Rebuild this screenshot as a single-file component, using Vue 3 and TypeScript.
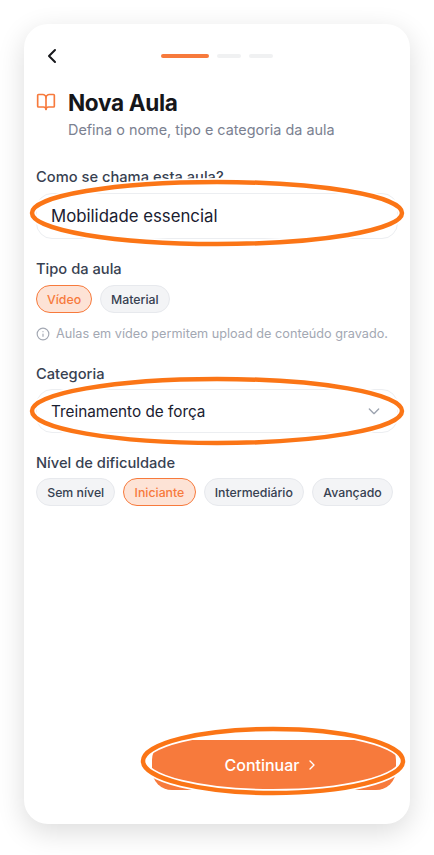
<script setup lang="ts">
const levels = ['Sem nível', 'Iniciante', 'Intermediário', 'Avançado']
</script>

<template>
  <div class="page">
    <main class="card">
      <header class="top">
        <button class="back" aria-label="Voltar">
          <svg width="24" height="24" viewBox="0 0 24 24" fill="none" stroke="#17181c" stroke-width="2" stroke-linecap="round" stroke-linejoin="round"><path d="M15 6l-6 6 6 6" /></svg>
        </button>
        <div class="steps">
          <span class="step on"></span>
          <span class="step"></span>
          <span class="step"></span>
        </div>
      </header>

      <section class="title-block">
        <div class="title-row">
          <svg class="book" width="20" height="20" viewBox="0 0 24 24" fill="none" stroke="#f77a3c" stroke-width="2" stroke-linecap="round" stroke-linejoin="round"><path d="M12 7v14" /><path d="M3 18a1 1 0 0 1-1-1V4a1 1 0 0 1 1-1h5a4 4 0 0 1 4 4 4 4 0 0 1 4-4h5a1 1 0 0 1 1 1v13a1 1 0 0 1-1 1h-6a3 3 0 0 0-3 3 3 3 0 0 0-3-3z" /></svg>
          <h1>Nova Aula</h1>
        </div>
        <p class="sub">Defina o nome, tipo e categoria da aula</p>
      </section>

      <div class="field first">
        <label>Como se chama esta aula?</label>
        <div class="box name">Mobilidade essencial</div>
      </div>

      <div class="field type">
        <label>Tipo da aula</label>
        <div class="chips">
          <span class="chip active">Vídeo</span>
          <span class="chip">Material</span>
        </div>
        <p class="hint">
          <svg width="14" height="14" viewBox="0 0 24 24" fill="none" stroke="#a3a8b3" stroke-width="2" stroke-linecap="round"><circle cx="12" cy="12" r="10" /><path d="M12 16v-4M12 8h.01" /></svg>
          Aulas em vídeo permitem upload de conteúdo gravado.
        </p>
      </div>

      <div class="field cat">
        <label>Categoria</label>
        <div class="box select">
          <span>Treinamento de força</span>
          <svg width="16" height="16" viewBox="0 0 24 24" fill="none" stroke="#9ca3af" stroke-width="2" stroke-linecap="round" stroke-linejoin="round"><path d="M5 9l7 7 7-7" /></svg>
        </div>
      </div>

      <div class="field level">
        <label>Nível de dificuldade</label>
        <div class="chips tight">
          <span v-for="l in levels" :key="l" class="chip" :class="{ active: l === 'Iniciante' }">{{ l }}</span>
        </div>
      </div>

      <footer class="foot">
        <button class="cta">
          Continuar
          <svg width="16" height="16" viewBox="0 0 24 24" fill="none" stroke="#fff" stroke-width="2" stroke-linecap="round" stroke-linejoin="round"><path d="M9 6l6 6-6 6" /></svg>
        </button>
      </footer>
    </main>

    <svg class="marks" width="434" height="855" viewBox="0 0 434 855" fill="none">
      <g stroke="#fff" stroke-width="8">
        <ellipse cx="217" cy="213" rx="185" ry="31" />
        <ellipse cx="217" cy="411" rx="185" ry="32" />
        <ellipse cx="273" cy="761" rx="130" ry="32" />
      </g>
      <g stroke="#fb7516" stroke-width="4.5">
        <ellipse cx="217" cy="213" rx="185" ry="31" />
        <ellipse cx="217" cy="411" rx="185" ry="32" />
        <ellipse cx="273" cy="761" rx="130" ry="32" />
      </g>
    </svg>
  </div>
</template>

<style>
html, body { margin: 0; background: #fff; }
</style>

<style scoped>
.page {
  position: relative;
  width: 434px;
  height: 855px;
  overflow: hidden;
  padding: 24px 24px 31px;
  box-sizing: border-box;
  background: #fff;
  font-family: Inter, "Noto Sans", sans-serif;
}
.card {
  height: 800px;
  box-sizing: border-box;
  padding: 16px 12px 34px;
  border-radius: 24px;
  background: #fff;
  box-shadow: 0 8px 28px rgba(0, 0, 0, 0.14);
  display: flex;
  flex-direction: column;
}
.top {
  position: relative;
  display: flex;
  justify-content: center;
  align-items: center;
  height: 32px;
}
.back {
  position: absolute;
  left: 4px;
  top: 4px;
  padding: 0;
  border: 0;
  background: none;
  height: 24px;
}
.steps { display: flex; gap: 8px; }
.step { width: 24px; height: 4px; border-radius: 2px; background: #f0f1f2; }
.step.on { width: 48px; background: #f77a3c; }
.title-block { margin-top: 15px; }
.title-row { display: flex; align-items: center; gap: 12px; height: 32px; }
.book { flex: none; margin-bottom: 2px; }
h1 { margin: 0; font-size: 22.6px; line-height: 32px; font-weight: 700; letter-spacing: -0.35px; color: #15161a; }
.sub { margin: 1px 0 0 32px; font-size: 14.4px; line-height: 20px; color: #7b8191; }
.field label { display: block; font-size: 14.7px; line-height: 20px; font-weight: 500; color: #374151; }
.first { margin-top: 27px; }
.box {
  box-sizing: border-box;
  height: 46px;
  margin-top: 6px;
  padding: 0 14px;
  display: flex;
  align-items: center;
  font-size: 16px;
  color: #1a2030;
  background: #fff;
  border: 1px solid #eceef1;
  border-radius: 16px;
}
.name { font-size: 16.8px; }
.type { margin-top: 20px; }
.chips { display: flex; gap: 8px; margin-top: 6px; }
.chips.tight { margin-top: 5px; }
.chip {
  box-sizing: border-box;
  height: 28px;
  padding: 0 10px;
  display: inline-flex;
  align-items: center;
  font-size: 12.3px;
  font-weight: 500;
  color: #374151;
  background: #f3f4f6;
  border: 1px solid #e7e9ed;
  border-radius: 14px;
}
.tight .chip { padding: 0 10.2px; }
.chip.active { color: #f77a3c; background: #fde3d6; border-color: #f77a3c; }
.hint {
  margin: 13px 0 0;
  display: flex;
  align-items: center;
  gap: 6px;
  font-size: 12.7px;
  line-height: 16px;
  color: #a3a8b3;
  white-space: nowrap;
}
.cat { margin-top: 22px; }
.select { justify-content: space-between; height: 44px; margin-top: 5px; font-size: 15.3px; padding-right: 15px; }
.level { margin-top: 20px; }
.foot { margin-top: auto; display: flex; justify-content: flex-end; padding-right: 2px; }
.cta {
  width: 244px;
  height: 50px;
  padding: 0 4px 0 0;
  border: 0;
  border-radius: 20px;
  background: #f77a3c;
  color: #fff;
  font: 500 16px Inter, sans-serif;
  display: flex;
  align-items: center;
  justify-content: center;
  gap: 4px;
}
.marks { position: absolute; left: 0; top: 0; pointer-events: none; }
</style>
